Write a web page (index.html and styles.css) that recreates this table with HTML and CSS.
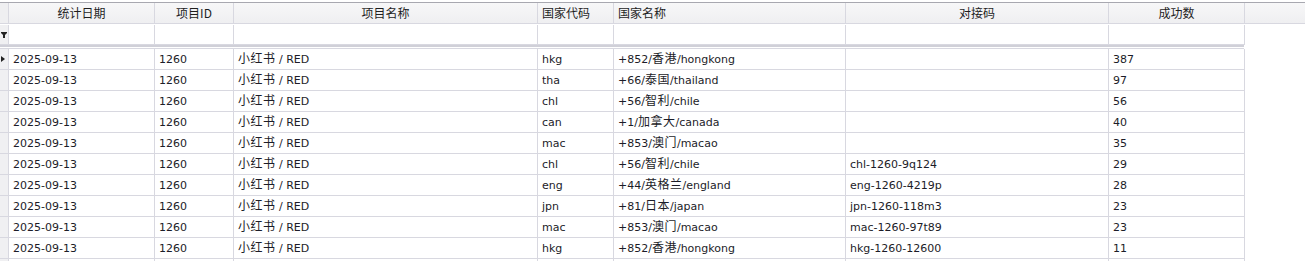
FILE: index.html
```html
<!DOCTYPE html>
<html lang="zh">
<head>
<meta charset="utf-8">
<link rel="stylesheet" href="styles.css">
</head>
<body>
<div class="grid">
  <div class="row head">
    <div class="c ind"></div>
    <div class="c w1 center">统计日期</div>
    <div class="c w2 center">项目ID</div>
    <div class="c w3 center">项目名称</div>
    <div class="c w4">国家代码</div>
    <div class="c w5">国家名称</div>
    <div class="c w6 center">对接码</div>
    <div class="c w7 center">成功数</div>
    <div class="c rest"></div>
  </div>
  <div class="row filter">
    <div class="c ind"><svg class="funnel" width="6" height="6" viewBox="0 0 6 6"><path d="M0 0h6v1L4 3v3H2V3L0 1z" fill="#222"/></svg></div>
    <div class="c w1"></div><div class="c w2"></div><div class="c w3"></div><div class="c w4"></div><div class="c w5"></div><div class="c w6"></div><div class="c w7"></div>
  </div>
  <div class="sep"></div>
  <div class="body">
    <div class="row"><div class="c ind"><svg width="4" height="6" viewBox="0 0 4 6"><path d="M0 0l4 3-4 3z" fill="#222"/></svg></div><div class="c w1">2025-09-13</div><div class="c w2">1260</div><div class="c w3"><span class="cn">小红书</span> / RED</div><div class="c w4">hkg</div><div class="c w5">+852/<span class="cn">香港</span>/hongkong</div><div class="c w6"></div><div class="c w7">387</div></div>
    <div class="row"><div class="c ind"></div><div class="c w1">2025-09-13</div><div class="c w2">1260</div><div class="c w3"><span class="cn">小红书</span> / RED</div><div class="c w4">tha</div><div class="c w5">+66/<span class="cn">泰国</span>/thailand</div><div class="c w6"></div><div class="c w7">97</div></div>
    <div class="row"><div class="c ind"></div><div class="c w1">2025-09-13</div><div class="c w2">1260</div><div class="c w3"><span class="cn">小红书</span> / RED</div><div class="c w4">chl</div><div class="c w5">+56/<span class="cn">智利</span>/chile</div><div class="c w6"></div><div class="c w7">56</div></div>
    <div class="row"><div class="c ind"></div><div class="c w1">2025-09-13</div><div class="c w2">1260</div><div class="c w3"><span class="cn">小红书</span> / RED</div><div class="c w4">can</div><div class="c w5">+1/<span class="cn">加拿大</span>/canada</div><div class="c w6"></div><div class="c w7">40</div></div>
    <div class="row"><div class="c ind"></div><div class="c w1">2025-09-13</div><div class="c w2">1260</div><div class="c w3"><span class="cn">小红书</span> / RED</div><div class="c w4">mac</div><div class="c w5">+853/<span class="cn">澳门</span>/macao</div><div class="c w6"></div><div class="c w7">35</div></div>
    <div class="row"><div class="c ind"></div><div class="c w1">2025-09-13</div><div class="c w2">1260</div><div class="c w3"><span class="cn">小红书</span> / RED</div><div class="c w4">chl</div><div class="c w5">+56/<span class="cn">智利</span>/chile</div><div class="c w6">chl-1260-9q124</div><div class="c w7">29</div></div>
    <div class="row"><div class="c ind"></div><div class="c w1">2025-09-13</div><div class="c w2">1260</div><div class="c w3"><span class="cn">小红书</span> / RED</div><div class="c w4">eng</div><div class="c w5">+44/<span class="cn">英格兰</span>/england</div><div class="c w6">eng-1260-4219p</div><div class="c w7">28</div></div>
    <div class="row"><div class="c ind"></div><div class="c w1">2025-09-13</div><div class="c w2">1260</div><div class="c w3"><span class="cn">小红书</span> / RED</div><div class="c w4">jpn</div><div class="c w5">+81/<span class="cn">日本</span>/japan</div><div class="c w6">jpn-1260-118m3</div><div class="c w7">23</div></div>
    <div class="row"><div class="c ind"></div><div class="c w1">2025-09-13</div><div class="c w2">1260</div><div class="c w3"><span class="cn">小红书</span> / RED</div><div class="c w4">mac</div><div class="c w5">+853/<span class="cn">澳门</span>/macao</div><div class="c w6">mac-1260-97t89</div><div class="c w7">23</div></div>
    <div class="row"><div class="c ind"></div><div class="c w1">2025-09-13</div><div class="c w2">1260</div><div class="c w3"><span class="cn">小红书</span> / RED</div><div class="c w4">hkg</div><div class="c w5">+852/<span class="cn">香港</span>/hongkong</div><div class="c w6">hkg-1260-12600</div><div class="c w7">11</div></div>
    <div class="row"><div class="c ind"></div><div class="c w1"></div><div class="c w2"></div><div class="c w3"></div><div class="c w4"></div><div class="c w5"></div><div class="c w6"></div><div class="c w7"></div></div>
  </div>
</div>
</body>
</html>
```

FILE: styles.css
```css
html, body {
  margin: 0;
  padding: 0;
  background: #ffffff;
  overflow: hidden;
}
body {
  font-family: "DejaVu Sans", "Noto Sans CJK SC", sans-serif;
  font-size: 11px;
  color: #1c1c28;
  padding-top: 2px;
}
.grid {
  width: 1305px;
}
.row {
  display: flex;
  height: 21px;
}
.c {
  box-sizing: border-box;
  height: 21px;
  border-right: 1px solid #d8d8e0;
  border-bottom: 1px solid #d8d8e0;
  padding-left: 4px;
  line-height: 21px;
  white-space: nowrap;
  overflow: hidden;
  flex: none;
}
.cn {
  font-family: "Noto Sans CJK SC", sans-serif;
  font-size: 12px;
  line-height: 0;
  letter-spacing: 0.5px;
}
.center {
  text-align: center;
  padding-left: 0;
}
.ind { width: 9px; background: #f0f0f2; padding: 0; display: flex; align-items: center; justify-content: flex-start; }
.ind svg { margin-left: 1px; }
.w1 { width: 146px; }
.w2 { width: 79px; }
.w3 { width: 304px; }
.w4 { width: 76px; }
.w5 { width: 232px; }
.w6 { width: 263px; }
.w7 { width: 136px; }
.rest { flex: 1; border-right: none; }
.head {
  height: 22px;
  border-top: 1px solid #a8a8b0;
}
.head .c {
  height: 21px;
  background: linear-gradient(#f7f7f8, #efeff1);
  font-family: "Noto Sans CJK SC", sans-serif;
  font-size: 12px;
  line-height: 20px;
  color: #1e1e1e;
}
.head .ind { background: #efeff1; }
.filter .c { height: 20px; }
.filter { height: 20px; }
.filter .ind { background: #f0f0f2; }
.sep {
  width: 1244px;
  height: 4px;
  box-sizing: border-box;
  border-top: 2px solid #d0d0d8;
  border-bottom: 1px solid #d8d8e0;
}
```
